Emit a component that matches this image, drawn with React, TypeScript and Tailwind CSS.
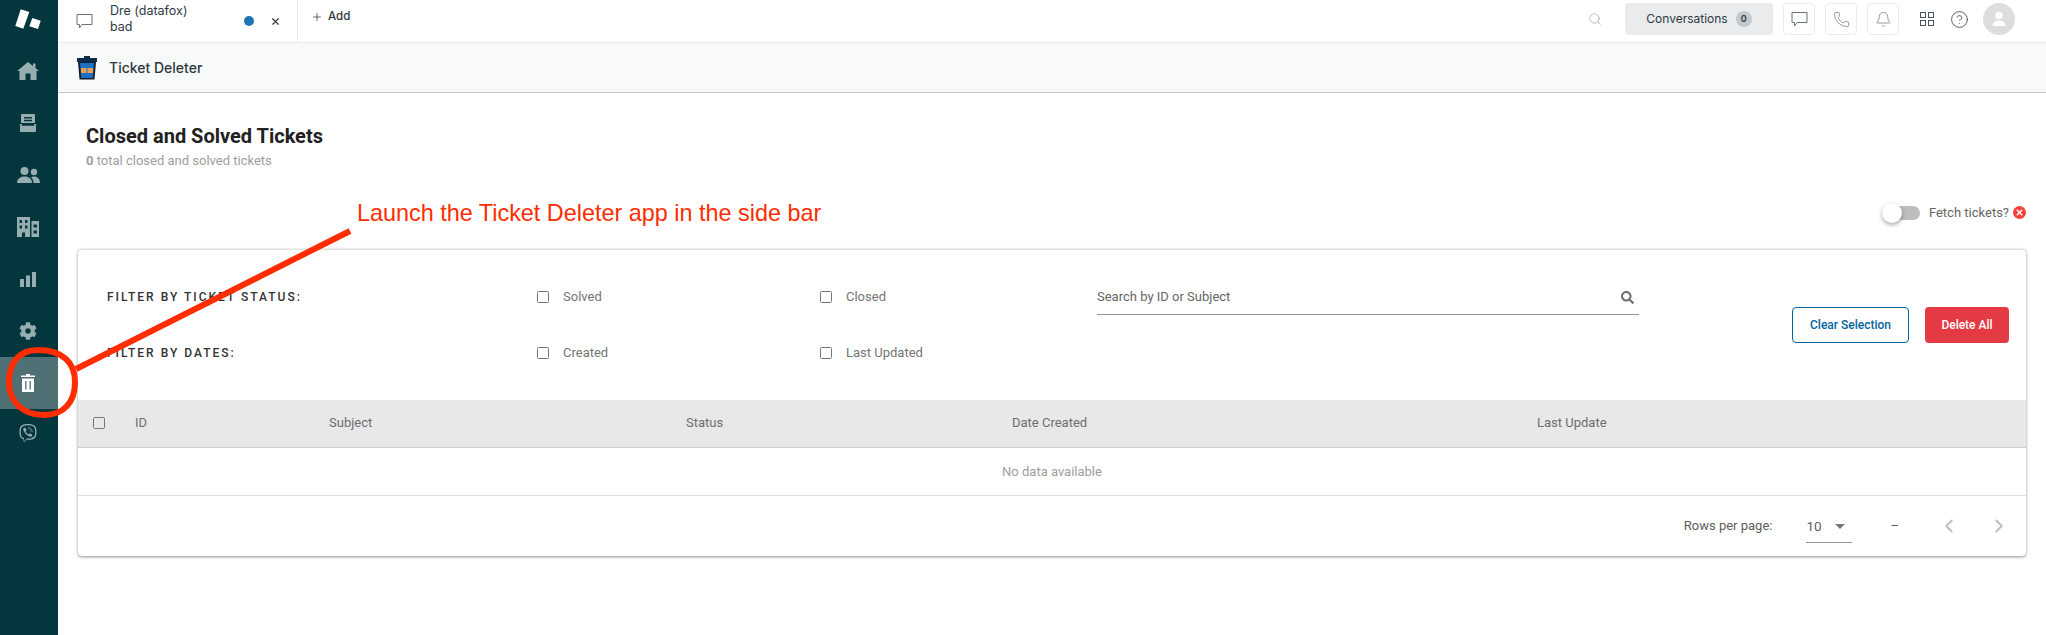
import React from "react";
import { FaCog, FaViber, FaSearch } from "react-icons/fa";
import { ChevronLeft, ChevronRight, Plus, X, Search, Phone, Bell, CircleHelp } from "lucide-react";

const ROBOTO = "font-['Roboto',sans-serif]";
const INTER = "font-['Inter',sans-serif]";

function Logo() {
  return (
    <svg width="26" height="20" viewBox="0 0 26 20" fill="#fff">
      <polygon points="5.700,0.300 14.300,3 8.300,19.700 0.300,17" />
      <polygon points="17.300,9 25.700,11.700 23,20 14.300,17.300" />
    </svg>
  );
}

function HomeIcon() {
  return (
    <svg width="22" height="18" viewBox="0 0 22 18" fill="#97aeb1">
      <path d="M11 0l5 4V1.500h2.500V6L22 9h-2.500v9h-6v-6.500h-5V18h-6V9H0z" />
    </svg>
  );
}

function InboxIcon() {
  return (
    <svg width="16" height="18" viewBox="0 0 16 18" fill="#97aeb1">
      <path d="M2 0h12a1 1 0 0 1 1 1v8H1V1a1 1 0 0 1 1-1zM4 3v1.500h8V3zM4 5.800v1.500h8V5.800z" fillRule="evenodd" />
      <path d="M0 10h1.800v1.800h12.400V10H16v7a1 1 0 0 1-1 1H1a1 1 0 0 1-1-1z" />
    </svg>
  );
}

function UsersIcon() {
  return (
    <svg width="23" height="16" viewBox="0 0 23 16" fill="#97aeb1">
      <circle cx="7.500" cy="4" r="4" />
      <path d="M0 16c0-4 3-6.500 7.500-6.500S15 12 15 16z" />
      <circle cx="17" cy="5" r="3.200" />
      <path d="M16.500 16c0-2.500-.8-4.300-2.400-5.700.8-.5 1.800-.7 2.900-.7 3.500 0 6 2.300 6 6.400z" />
    </svg>
  );
}

function BuildingIcon() {
  return (
    <svg width="22" height="20" viewBox="0 0 22 20" fill="#97aeb1">
      <path
        fillRule="evenodd"
        d="M0 0h13v20H8v-4.500H5V20H0zM2.500 3v3h2.500V3zM8 3v3h2.500V3zM2.500 8.500v3h2.500v-3zM8 8.500v3h2.500v-3z"
      />
      <path
        fillRule="evenodd"
        d="M14.500 4H22v16h-7.500zM16.500 7.500v3H20v-3zM16.500 13.500v3H20v-3z"
      />
    </svg>
  );
}

function ChartIcon() {
  return (
    <svg width="16" height="15" viewBox="0 0 16 15" fill="#97aeb1">
      <rect x="0" y="7" width="4" height="8" />
      <rect x="6" y="3.500" width="4" height="11.500" />
      <rect x="12" y="0" width="4" height="15" />
    </svg>
  );
}

function TrashIcon() {
  return (
    <svg width="14" height="18" viewBox="0 0 14 18" fill="#fff">
      <path d="M5 0h4v1.500h5V3H0V1.500h5z" />
      <path
        fillRule="evenodd"
        d="M1 4.500h12V18H1zM4.200 7v8.500h1.300V7zM8.500 7v8.500h1.300V7z"
      />
    </svg>
  );
}

function NavItem({ children, active }: { children: React.ReactNode; active?: boolean }) {
  return (
    <div className={`h-[52px] flex items-center justify-center pr-[2px] ${active ? "bg-[#4f7075]" : ""}`}>
      {children}
    </div>
  );
}

function Sidebar() {
  return (
    <aside className="w-[58px] shrink-0 bg-[#03363d] flex flex-col">
      <div className="h-[45px] flex items-center justify-center pb-[7px] pr-[2px]">
        <Logo />
      </div>
      <NavItem><HomeIcon /></NavItem>
      <NavItem><InboxIcon /></NavItem>
      <NavItem><UsersIcon /></NavItem>
      <NavItem><BuildingIcon /></NavItem>
      <NavItem><ChartIcon /></NavItem>
      <NavItem><FaCog size={18} color="#97aeb1" /></NavItem>
      <NavItem active><TrashIcon /></NavItem>
      <div className="h-[48px] flex items-center justify-center pr-[2px]">
        <FaViber size={18} color="#97aeb1" />
      </div>
    </aside>
  );
}

function ChatIcon({ color, size = 17 }: { color: string; size?: number }) {
  return (
    <svg width={size} height={size} viewBox="0 0 17 17" fill="none" stroke={color} strokeWidth="1">
      <path d="M1 1.500h15v10H6l-2.500 3.500v-3.500H1z" />
    </svg>
  );
}

function ToolButton({ children }: { children: React.ReactNode }) {
  return (
    <div className="w-[32px] h-[32px] border border-[#e9ebed] rounded flex items-center justify-center">
      {children}
    </div>
  );
}

function TopBar() {
  return (
    <header className={`h-[43px] shrink-0 border-b border-[#e9ebed] flex items-stretch bg-white ${INTER}`}>
      <div className="w-[240px] border-r border-[#e9ebed] flex items-center pl-[18px] pr-[16px]">
        <ChatIcon color="#68737d" />
        <div className="ml-[17px] flex-1 text-[12.500px] leading-[16px] text-[#2f3941] -mt-[5px]">
          <div>Dre (datafox)</div>
          <div>bad</div>
        </div>
        <span className="w-[10px] h-[10px] rounded-full bg-[#1f73b7] mr-[16px] -mt-[1px]" />
        <X size={11} strokeWidth={2.5} color="#2f3941" />
      </div>
      <div className="flex items-center pl-[13px] gap-[5px] text-[11.500px] font-medium text-[#2f3941] pb-[8px]">
        <Plus size={12} strokeWidth={1.5} />
        <span>Add</span>
      </div>
      <div className="ml-auto flex items-center pr-[31px] pb-[4px]">
        <Search size={14} strokeWidth={1} color="#87929d" className="mr-[23px]" />
        <div className="w-[148px] h-[32px] rounded bg-[#e9ebed] flex items-center justify-center gap-[8px] text-[12px] text-[#2f3941] mr-[10px]">
          <span>Conversations</span>
          <span className="w-[16px] h-[16px] rounded-full bg-[#c2c8cc] flex items-center justify-center text-[9px] font-semibold">0</span>
        </div>
        <div className="flex gap-[10px]">
          <ToolButton><ChatIcon color="#68737d" /></ToolButton>
          <ToolButton><Phone size={17} strokeWidth={1} color="#68737d" /></ToolButton>
          <ToolButton><Bell size={17} strokeWidth={1} color="#68737d" /></ToolButton>
        </div>
        <svg className="ml-[21px]" width="14" height="14" viewBox="0 0 14 14" fill="none" stroke="#49545c" strokeWidth="1">
          <rect x="0.500" y="0.500" width="5" height="5" />
          <rect x="8.500" y="0.500" width="5" height="5" />
          <rect x="0.500" y="8.500" width="5" height="5" />
          <rect x="8.500" y="8.500" width="5" height="5" />
        </svg>
        <CircleHelp size={19} strokeWidth={1} color="#2f3941" className="ml-[16px]" />
        <div className="ml-[14px] w-[32px] h-[32px] rounded-full bg-[#dddddd] flex items-center justify-center">
          <svg width="16" height="16" viewBox="0 0 16 16" fill="#fff">
            <circle cx="8" cy="4.500" r="3.800" />
            <path d="M1.500 15c0-3.500 3-5.500 6.500-5.500s6.500 2 6.500 5.500z" />
          </svg>
        </div>
      </div>
    </header>
  );
}

function AppBar() {
  return (
    <div className={`h-[50px] shrink-0 bg-[#f8f9f9] border-b border-[#c2c8cc] flex items-center pl-[18px] ${INTER}`}>
      <svg width="22" height="25" viewBox="0 0 22 25" className="shrink-0">
        <path d="M8 1h6v2h-6z" fill="#0f2a4a" />
        <rect x="1" y="3" width="20" height="4" fill="#0f2a4a" />
        <path d="M2 7h18l-1.500 17.500h-15z" fill="#111f33" />
        <path d="M4 8h14l-1.200 15h-11.600z" fill="#1f6fc4" />
        <rect x="5" y="13" width="5.500" height="5" fill="#e5a257" />
        <rect x="11.500" y="13" width="5.500" height="5" fill="#e5a257" />
      </svg>
      <span className="ml-[11px] text-[14px] font-medium text-[#2f3941]">Ticket Deleter</span>
    </div>
  );
}

function Check() {
  return <span className="w-[12px] h-[12px] shrink-0 rounded-[1.5px] border-[1.5px] border-[#757575]" />;
}

function CheckOption({ label }: { label: string }) {
  return (
    <div className="flex items-center gap-[14px] text-[13px] text-[#757575]">
      <Check />
      <span>{label}</span>
    </div>
  );
}

function FilterLabel({ children }: { children: React.ReactNode }) {
  return <div className="text-[12px] font-medium tracking-[2px] text-[#333333]">{children}</div>;
}

function Filters() {
  return (
    <div className="h-[150px] flex">
      <div className="pl-[29px] pt-[19px] grid grid-cols-[430px_283px_547px] grid-rows-[56px_56px] items-center">
        <FilterLabel>FILTER BY TICKET STATUS:</FilterLabel>
        <CheckOption label="Solved" />
        <CheckOption label="Closed" />
        <FilterLabel>FILTER BY DATES:</FilterLabel>
        <CheckOption label="Created" />
        <CheckOption label="Last Updated" />
      </div>
      <div className="ml-[-270px] pt-[30px]">
        <div className="w-[542px] h-[35px] border-b border-[#949494] flex items-center justify-between pr-[5px] text-[13px] text-[#666666]">
          <span>Search by ID or Subject</span>
          <FaSearch size={13} color="#6f6f6f" />
        </div>
      </div>
      <div className="ml-auto pt-[57px] pr-[17px] flex gap-[16px]">
        <button className="w-[117px] h-[36px] rounded border border-[#03659e] text-[#03659e] text-[12px] font-medium">Clear Selection</button>
        <button className="w-[84px] h-[36px] rounded bg-[#e43a44] text-white text-[12px] font-medium">Delete All</button>
      </div>
    </div>
  );
}

function Table() {
  return (
    <div>
      <div className="h-[48px] bg-[#e8e8e8] border-b border-[#cfcfcf] pb-[1px] grid grid-cols-[57px_194px_357px_326px_525px_1fr] items-center text-[13px] text-[#6e6e6e]">
        <div className="pl-[15px] flex"><Check /></div>
        <div>ID</div>
        <div>Subject</div>
        <div>Status</div>
        <div>Date Created</div>
        <div>Last Update</div>
      </div>
      <div className="h-[48px] border-b border-[#e0e0e0] flex items-center justify-center text-[13px] text-[#9e9e9e]">
        No data available
      </div>
    </div>
  );
}

function Footer() {
  return (
    <div className="h-[60px] flex items-center justify-end text-[#5c5c5c] text-[13px]">
      <span className="mr-[34px]">Rows per page:</span>
      <div className="w-[46px] h-[32px] mt-[1px] border-b border-[#949494] flex items-center justify-between pr-[7px] text-[13.500px] mr-[38px]">
        <span>10</span>
        <svg width="10" height="5" viewBox="0 0 10 5" fill="#757575"><path d="M0 0h10L5 5z" /></svg>
      </div>
      <span className="mr-[39px]">–</span>
      <ChevronLeft size={22} strokeWidth={2} color="#bdbdbd" className="mr-[28px]" />
      <ChevronRight size={22} strokeWidth={2} color="#bdbdbd" className="mr-[16px]" />
    </div>
  );
}

function Annotation() {
  return (
    <div className="absolute inset-0 pointer-events-none">
      <svg width="2046" height="635" className="absolute left-0 top-0" fill="none" stroke="#ff2d00">
        <line x1="350" y1="231" x2="76" y2="369" strokeWidth="6" />
        <path d="M75 382C75 362 62 350 38 350C18 350 9 364 9 382C9 403 24 415 44 415C64 415 75 402 75 382Z" strokeWidth="6" />
      </svg>
      <div className="absolute left-[357px] top-[198px] font-['Liberation_Sans',sans-serif] text-[23.400px] leading-[30px] text-[#ff2d00] whitespace-nowrap">
        Launch the Ticket Deleter app in the side bar
      </div>
    </div>
  );
}

export default function App() {
  return (
    <div className="relative w-[2046px] h-[635px] flex overflow-hidden bg-white">
      <Sidebar />
      <div className="flex-1 min-w-0 flex flex-col">
        <TopBar />
        <AppBar />
        <main className={`flex-1 px-[20px] ${ROBOTO}`}>
          <div className="h-[58px] pl-[8px] pt-[31px]">
            <h1 className="text-[20px] leading-[24px] font-bold text-[#212121]">Closed and Solved Tickets</h1>
          </div>
          <div className="pl-[8px] mt-[2px] text-[13px] leading-[16px] text-[#9e9e9e]"><b className="font-bold">0</b> total closed and solved tickets</div>
          <div className="h-[80px] flex items-start justify-end pt-[34px] pr-0">
            <div className="flex items-center text-[13px] text-[#666666]">
              <div className="relative w-[36px] h-[14px] rounded-full bg-[#bdbdbd] mr-[9px] flex items-center">
                <span className="w-[20px] h-[20px] -ml-[2px] rounded-full bg-white shadow-[0_2px_4px_rgba(0,0,0,0.35)]" />
              </div>
              <span>Fetch tickets?</span>
              <span className="ml-[4px] w-[13px] h-[13px] rounded-full bg-[#f44336] flex items-center justify-center">
                <X size={9} strokeWidth={4} color="#fff" />
              </span>
            </div>
          </div>
          <div className="rounded border-t border-[#e0e0e0] bg-white shadow-[0_1px_3px_rgba(0,0,0,0.45)]">
            <Filters />
            <Table />
            <Footer />
          </div>
        </main>
      </div>
      <Annotation />
    </div>
  );
}
